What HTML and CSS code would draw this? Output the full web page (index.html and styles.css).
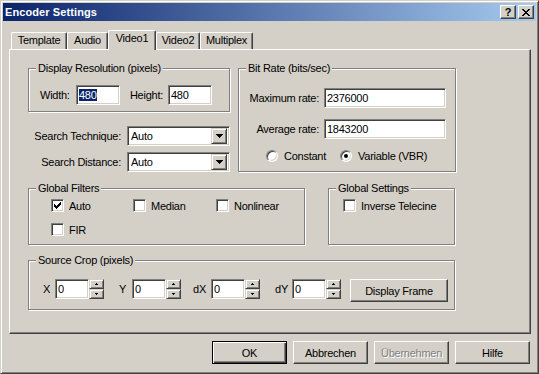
FILE: index.html
```html
<!DOCTYPE html>
<html lang="en">

<head>
    <meta charset="UTF-8">
    <meta name="viewport" content="width=device-width, initial-scale=1.0">
    <title>Encoder Settings</title>
    <link rel="stylesheet" href="styles.css">
</head>

<body>
    <!-- dialog window -->
    <div class="window">
        <div class="titlebar">
            <span class="title">Encoder Settings</span>
            <span class="cap-btn cap-help">?</span>
            <span class="cap-btn cap-close">
                <svg width="8" height="7" viewBox="0 0 8 7"><path d="M0 0h2v1h1v1h2V1h1V0h2v1H7v1H6v1H5v1h1v1h1v1h1v1H6V6H5V5H3v1H2v1H0V6h1V5h1V4h1V3H2V2H1V1H0z"/></svg>
            </span>
        </div>

        <div class="client">
            <!-- tabs -->
            <div class="tabs">
                <div class="tab tab-template">Template</div>
                <div class="tab tab-audio">Audio</div>
                <div class="tab tab-video1 active">Video1</div>
                <div class="tab tab-video2">Video2</div>
                <div class="tab tab-multiplex">Multiplex</div>
            </div>

            <div class="panel">
                <div class="row row-top">
                    <div class="left-col">
                        <div class="group group-res">
                            <span class="legend">Display Resolution (pixels)</span>
                            <div class="res-row">
                                <span class="lbl lbl-width">Width:</span>
                                <div class="edit edit-res"><span class="selected">480</span></div>
                                <span class="lbl lbl-height">Height:</span>
                                <div class="edit edit-res">480</div>
                            </div>
                        </div>
                        <div class="combo-row">
                            <span class="lbl">Search Technique:</span>
                            <div class="combo">
                                <span class="combo-text">Auto</span>
                                <span class="combo-btn"><svg width="7" height="4" viewBox="0 0 7 4"><path d="M0 0h7v1H6v1H5v1H4v1H3V3H2V2H1V1H0z"/></svg></span>
                            </div>
                        </div>
                        <div class="combo-row">
                            <span class="lbl">Search Distance:</span>
                            <div class="combo">
                                <span class="combo-text">Auto</span>
                                <span class="combo-btn"><svg width="7" height="4" viewBox="0 0 7 4"><path d="M0 0h7v1H6v1H5v1H4v1H3V3H2V2H1V1H0z"/></svg></span>
                            </div>
                        </div>
                    </div>

                    <div class="group group-bitrate">
                        <span class="legend">Bit Rate (bits/sec)</span>
                        <div class="rate-grid">
                            <span class="lbl">Maximum rate:</span>
                            <div class="edit">2376000</div>
                            <span class="lbl">Average rate:</span>
                            <div class="edit">1843200</div>
                        </div>
                        <div class="radio-row">
                            <span class="radio-item radio-constant"><span class="radio"></span>Constant</span>
                            <span class="radio-item"><span class="radio checked"></span>Variable (VBR)</span>
                        </div>
                    </div>
                </div>

                <div class="row row-mid">
                    <div class="group group-filters">
                        <span class="legend">Global Filters</span>
                        <div class="check-grid">
                            <span class="check-item"><span class="check"><svg width="7" height="7" viewBox="0 0 7 7"><path d="M6 0h1v3H6v1H5v1H4v1H3v1H2V6H1V5H0V2h1v1h1v1h1V3h1V2h1V1h1z"/></svg></span>Auto</span>
                            <span class="check-item"><span class="check"></span>Median</span>
                            <span class="check-item"><span class="check"></span>Nonlinear</span>
                            <span class="check-item"><span class="check"></span>FIR</span>
                        </div>
                    </div>
                    <div class="group group-settings">
                        <span class="legend">Global Settings</span>
                        <span class="check-item"><span class="check"></span>Inverse Telecine</span>
                    </div>
                </div>

                <div class="group group-crop">
                    <span class="legend">Source Crop (pixels)</span>
                    <div class="crop-row">
                        <span class="lbl crop-x">X</span>
                        <div class="edit edit-crop">0</div>
                        <div class="spin">
                            <span class="spin-half"><svg width="3" height="2" viewBox="0 0 3 2"><path d="M1 0h1v1h1v1H0V1h1z"/></svg></span>
                            <span class="spin-half"><svg width="3" height="2" viewBox="0 0 3 2"><path d="M0 0h3v1H2v1H1V1H0z"/></svg></span>
                        </div>
                        <span class="lbl crop-y">Y</span>
                        <div class="edit edit-crop">0</div>
                        <div class="spin">
                            <span class="spin-half"><svg width="3" height="2" viewBox="0 0 3 2"><path d="M1 0h1v1h1v1H0V1h1z"/></svg></span>
                            <span class="spin-half"><svg width="3" height="2" viewBox="0 0 3 2"><path d="M0 0h3v1H2v1H1V1H0z"/></svg></span>
                        </div>
                        <span class="lbl crop-dx">dX</span>
                        <div class="edit edit-crop">0</div>
                        <div class="spin">
                            <span class="spin-half"><svg width="3" height="2" viewBox="0 0 3 2"><path d="M1 0h1v1h1v1H0V1h1z"/></svg></span>
                            <span class="spin-half"><svg width="3" height="2" viewBox="0 0 3 2"><path d="M0 0h3v1H2v1H1V1H0z"/></svg></span>
                        </div>
                        <span class="lbl crop-dy">dY</span>
                        <div class="edit edit-crop">0</div>
                        <div class="spin">
                            <span class="spin-half"><svg width="3" height="2" viewBox="0 0 3 2"><path d="M1 0h1v1h1v1H0V1h1z"/></svg></span>
                            <span class="spin-half"><svg width="3" height="2" viewBox="0 0 3 2"><path d="M0 0h3v1H2v1H1V1H0z"/></svg></span>
                        </div>
                        <span class="btn btn-frame">Display Frame</span>
                    </div>
                </div>
            </div>

            <!-- bottom buttons -->
            <div class="buttons">
                <span class="btn btn-default">OK</span>
                <span class="btn">Abbrechen</span>
                <span class="btn disabled">Übernehmen</span>
                <span class="btn">Hilfe</span>
            </div>
        </div>
    </div>
</body>

</html>
```

FILE: styles.css
```css
* {
    margin: 0;
    padding: 0;
    box-sizing: border-box;
}

body {
    background: #d4d0c8;
    font-family: "Liberation Sans", Arial, sans-serif;
    font-size: 11px;
    letter-spacing: -0.25px;
    color: #000;
}

/* window frame */
.window {
    width: 539px;
    height: 374px;
    background: #d4d0c8;
    border: 1px solid;
    border-color: #d4d0c8 #404040 #404040 #d4d0c8;
    box-shadow: inset 1px 1px #fff, inset -1px -1px #808080;
    padding: 2px;
}

.titlebar {
    height: 18px;
    display: flex;
    align-items: center;
    background: linear-gradient(to right, #0a246a, #a6caf0);
    padding-left: 2px;
}

.title {
    flex: 1;
    color: #fff;
    font-weight: bold;
    font-size: 11px;
    letter-spacing: 0.1px;
}

.cap-btn {
    width: 16px;
    height: 14px;
    display: flex;
    align-items: center;
    justify-content: center;
    background: #d4d0c8;
    border: 1px solid;
    border-color: #fff #404040 #404040 #fff;
    box-shadow: inset -1px -1px #808080;
    font-weight: bold;
    font-size: 11px;
    line-height: 12px;
}

.cap-help {
    margin-right: 2px;
}

.cap-close {
    margin-right: 2px;
}

/* client area */
.client {
    padding-top: 9px;
}

.tabs {
    display: flex;
    align-items: flex-end;
    height: 20px;
    margin: 0 0 -1px 8px;
    position: relative;
    z-index: 1;
}

.tab {
    height: 17px;
    margin-bottom: 1px;
    border-top: 1px solid #fff;
    border-left: 1px solid #fff;
    border-right: 1px solid #404040;
    box-shadow: inset -1px 0 #808080;
    border-radius: 2px 2px 0 0;
    background: #d4d0c8;
    text-align: center;
    line-height: 14px;
}

.tab.active {
    height: 20px;
    margin-bottom: 0;
}

.tab-template {
    width: 56px;
}

.tab-audio {
    width: 41px;
}

.tab-video1 {
    width: 48px;
}

.tab-video2 {
    width: 44px;
}

.tab-multiplex {
    width: 53px;
}

.panel {
    margin-left: 6px;
    width: 522px;
    height: 285px;
    border: 1px solid;
    border-color: #fff #404040 #404040 #fff;
    box-shadow: inset -1px -1px #808080;
    padding: 18px 0 0 18px;
}

.row {
    display: flex;
    align-items: flex-start;
}

.row-mid {
    margin: 16px 0 15px;
}

/* etched group box */
.group {
    position: relative;
    border: 1px solid #808080;
    box-shadow: inset 1px 1px #fff, 1px 1px #fff;
}

.legend {
    position: absolute;
    top: -7px;
    left: 7px;
    padding: 0 2px;
    background: #d4d0c8;
    line-height: 13px;
    white-space: nowrap;
}

.lbl {
    white-space: nowrap;
}

/* sunken edit box */
.edit {
    height: 20px;
    background: #fff;
    border: 1px solid;
    border-color: #808080 #fff #fff #808080;
    box-shadow: inset 1px 1px #404040, inset -1px -1px #d4d0c8;
    padding: 1px 0 0 2px;
    line-height: 16px;
    white-space: nowrap;
}

.selected {
    background: #0a246a;
    color: #fff;
}

.left-col {
    width: 202px;
}

.group-res {
    height: 44px;
    padding-top: 16px;
}

.res-row {
    display: flex;
    align-items: center;
}

.lbl-width {
    width: 47px;
    padding-left: 11px;
}

.lbl-height {
    width: 48px;
    text-align: right;
    padding-right: 5px;
}

.edit-res {
    width: 44px;
}

.combo-row {
    display: flex;
    align-items: center;
    justify-content: flex-end;
    margin-top: 14px;
}

.combo-row + .combo-row {
    margin-top: 6px;
}

.combo-row .lbl {
    margin-right: 6px;
}

.combo {
    width: 103px;
    height: 20px;
    display: flex;
    align-items: center;
    background: #fff;
    border: 1px solid;
    border-color: #808080 #fff #fff #808080;
    box-shadow: inset 1px 1px #404040, inset -1px -1px #d4d0c8;
    padding: 0 2px 0 3px;
}

.combo-text {
    flex: 1;
}

.combo-btn {
    width: 16px;
    height: 16px;
    display: flex;
    align-items: center;
    justify-content: center;
    background: #d4d0c8;
    border: 1px solid;
    border-color: #d4d0c8 #404040 #404040 #d4d0c8;
    box-shadow: inset 1px 1px #fff, inset -1px -1px #808080;
}

/* bit rate */
.group-bitrate {
    width: 218px;
    height: 104px;
    margin-left: 8px;
    padding-top: 19px;
}

.rate-grid {
    display: grid;
    grid-template-columns: 80px 122px;
    column-gap: 5px;
    row-gap: 11px;
    align-items: center;
}

.rate-grid .lbl {
    text-align: right;
}

.radio-row {
    display: flex;
    align-items: center;
    margin-top: 11px;
    padding-left: 27px;
}

.radio-item {
    display: flex;
    align-items: center;
}

.radio-constant {
    width: 74px;
}

.radio {
    width: 12px;
    height: 12px;
    margin-right: 6px;
    border-radius: 50%;
    background: #fff;
    border: 1px solid;
    border-color: #808080 #fff #fff #808080;
    box-shadow: inset 1px 1px #404040, inset -1px -1px #d4d0c8;
    position: relative;
}

.radio.checked::after {
    content: "";
    position: absolute;
    left: 3px;
    top: 3px;
    width: 4px;
    height: 4px;
    border-radius: 50%;
    background: #000;
}

/* check boxes */
.check-item {
    display: flex;
    align-items: center;
    white-space: nowrap;
}

.check {
    width: 13px;
    height: 13px;
    margin-right: 5px;
    display: flex;
    align-items: center;
    justify-content: center;
    background: #fff;
    border: 1px solid;
    border-color: #808080 #fff #fff #808080;
    box-shadow: inset 1px 1px #404040, inset -1px -1px #d4d0c8;
}

.group-filters {
    width: 277px;
    height: 57px;
    padding: 10px 0 0 22px;
}

.check-grid {
    display: grid;
    grid-template-columns: 82px 83px auto;
    grid-auto-rows: 13px;
    row-gap: 11px;
}

.group-settings {
    width: 127px;
    height: 57px;
    margin-left: 23px;
    padding: 10px 0 0 14px;
}

/* source crop */
.group-crop {
    width: 427px;
    height: 50px;
    padding-top: 18px;
}

.crop-row {
    display: flex;
    align-items: flex-start;
}

.crop-row .lbl {
    text-align: right;
    line-height: 20px;
}

.crop-x {
    width: 26px;
    padding-right: 5px;
}

.crop-y {
    width: 28px;
    padding-right: 6px;
}

.crop-dx {
    width: 30px;
    padding-right: 5px;
}

.crop-dy {
    width: 32px;
    padding-right: 4px;
}

.edit-crop {
    width: 34px;
}

.spin {
    width: 15px;
    height: 20px;
    display: flex;
    flex-direction: column;
}

.spin-half {
    height: 10px;
    display: flex;
    align-items: center;
    justify-content: center;
    background: #d4d0c8;
    border: 1px solid;
    border-color: #d4d0c8 #404040 #404040 #d4d0c8;
    box-shadow: inset 1px 1px #fff, inset -1px -1px #808080;
}

/* push buttons */
.btn {
    display: flex;
    align-items: center;
    justify-content: center;
    width: 75px;
    height: 23px;
    background: #d4d0c8;
    border: 1px solid;
    border-color: #fff #404040 #404040 #fff;
    box-shadow: inset -1px -1px #808080;
    white-space: nowrap;
}

.btn-frame {
    width: 98px;
    margin-left: 9px;
}

.btn-default {
    border-color: #000;
    box-shadow: inset 1px 1px #fff, inset -1px -1px #404040, inset -2px -2px #808080;
}

.btn.disabled {
    color: #808080;
    text-shadow: 1px 1px #fff;
}

.buttons {
    display: flex;
    justify-content: flex-end;
    gap: 6px;
    width: 522px;
    margin: 7px 0 0 6px;
    padding-right: 1px;
}
```
